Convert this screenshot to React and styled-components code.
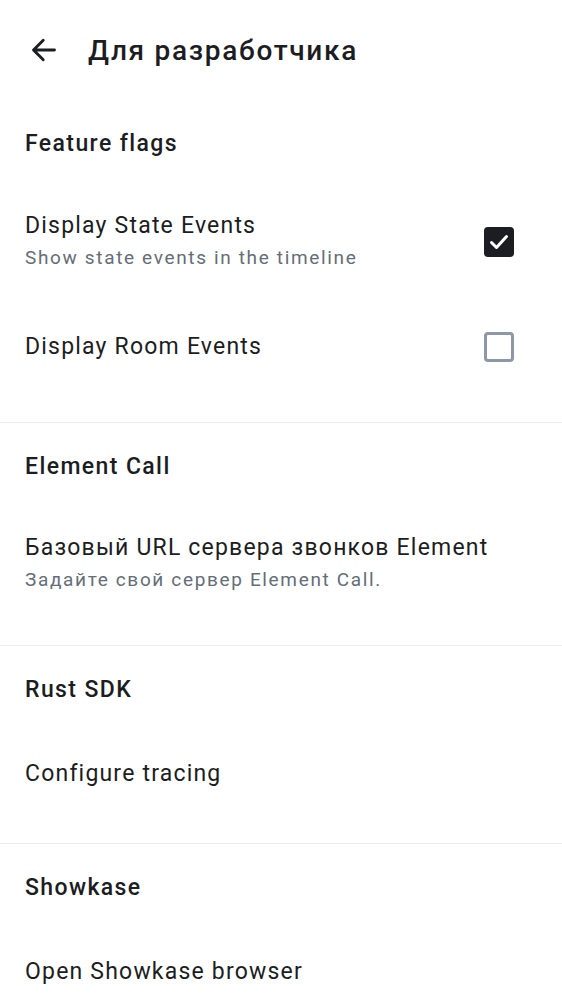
import React from "react";
import styled, { createGlobalStyle } from "styled-components";

const GlobalStyle = createGlobalStyle`
  body {
    margin: 0;
    background: #ffffff;
    font-family: Roboto, "Noto Sans", "Liberation Sans", sans-serif;
    color: #1b1d22;
  }
`;

const Page = styled.div`
  width: 562px;
  height: 1000px;
  overflow: hidden;
  background: #ffffff;
`;

const TopBar = styled.header`
  height: 100px;
  display: flex;
  align-items: center;
  padding-left: 26px;
  gap: 26px;
`;

const BackButton = styled.button`
  width: 36px;
  height: 36px;
  padding: 0;
  border: none;
  background: none;
  display: flex;
  color: #1b1d22;
`;

const PageTitle = styled.h1`
  margin: 0;
  font-size: 28px;
  font-weight: 500;
  letter-spacing: 1.7px;
`;

const Section = styled.section`
  padding-bottom: ${(p) => p.$bottom || 26}px;
  border-bottom: ${(p) => (p.$last ? "none" : "1px solid #e8ebef")};
`;

const SectionTitle = styled.h2`
  margin: 0;
  height: 86px;
  display: flex;
  align-items: center;
  padding: 0 25px;
  font-size: 23px;
  font-weight: 500;
  letter-spacing: 1.4px;
`;

const Item = styled.div`
  display: flex;
  align-items: center;
  min-height: ${(p) => p.$min}px;
  padding: 23px 48px 23px 25px;
  box-sizing: border-box;
`;

const Texts = styled.div`
  flex: 1;
  display: flex;
  flex-direction: column;
`;

const ItemTitle = styled.div`
  font-size: 23px;
  line-height: 32px;
  letter-spacing: 1.2px;
`;

const ItemSubtitle = styled.div`
  font-size: 19px;
  line-height: 32px;
  color: #656d77;
  letter-spacing: 1.65px;
`;

const Box = styled.div`
  width: 30px;
  height: 30px;
  box-sizing: border-box;
  border-radius: 4px;
  display: flex;
  align-items: center;
  justify-content: center;
  background: ${(p) => (p.$checked ? "#1b1d22" : "#ffffff")};
  border: ${(p) => (p.$checked ? "none" : "3px solid #8d97a5")};
`;

const Checkbox = ({ checked }) => (
  <Box $checked={checked}>
    {checked && (
      <svg width="24" height="24" viewBox="0 0 24 24">
        <path d="M4.5 12.5 9.5 17.5 19.5 6.5" fill="none" stroke="#ffffff" strokeWidth="3" strokeLinecap="round" strokeLinejoin="round" />
      </svg>
    )}
  </Box>
);

const Row = ({ title, subtitle, control, min }) => (
  <Item $min={min || (control !== undefined ? 98 : 84)}>
    <Texts>
      <ItemTitle>{title}</ItemTitle>
      {subtitle && <ItemSubtitle>{subtitle}</ItemSubtitle>}
    </Texts>
    {control !== undefined && <Checkbox checked={control} />}
  </Item>
);

export default function App() {
  return (
    <Page>
      <GlobalStyle />
      <TopBar>
        <BackButton aria-label="back">
          <svg width="36" height="36" viewBox="0 0 24 24">
            <path d="M19 12H5.5M11.5 5.5 5 12l6.5 6.5" fill="none" stroke="currentColor" strokeWidth="1.9" strokeLinecap="round" strokeLinejoin="round" />
          </svg>
        </BackButton>
        <PageTitle>Для разработчика</PageTitle>
      </TopBar>

      <Section>
        <SectionTitle>Feature flags</SectionTitle>
        <Row title="Display State Events" subtitle="Show state events in the timeline" control={true} min={112} />
        <Row title="Display Room Events" control={false} />
      </Section>

      <Section>
        <SectionTitle>Element Call</SectionTitle>
        <Row title="Базовый URL сервера звонков Element" subtitle="Задайте свой сервер Element Call." />
      </Section>

      <Section $bottom={27}>
        <SectionTitle>Rust SDK</SectionTitle>
        <Row title="Configure tracing" />
      </Section>

      <Section $last>
        <SectionTitle>Showkase</SectionTitle>
        <Row title="Open Showkase browser" />
      </Section>
    </Page>
  );
}
